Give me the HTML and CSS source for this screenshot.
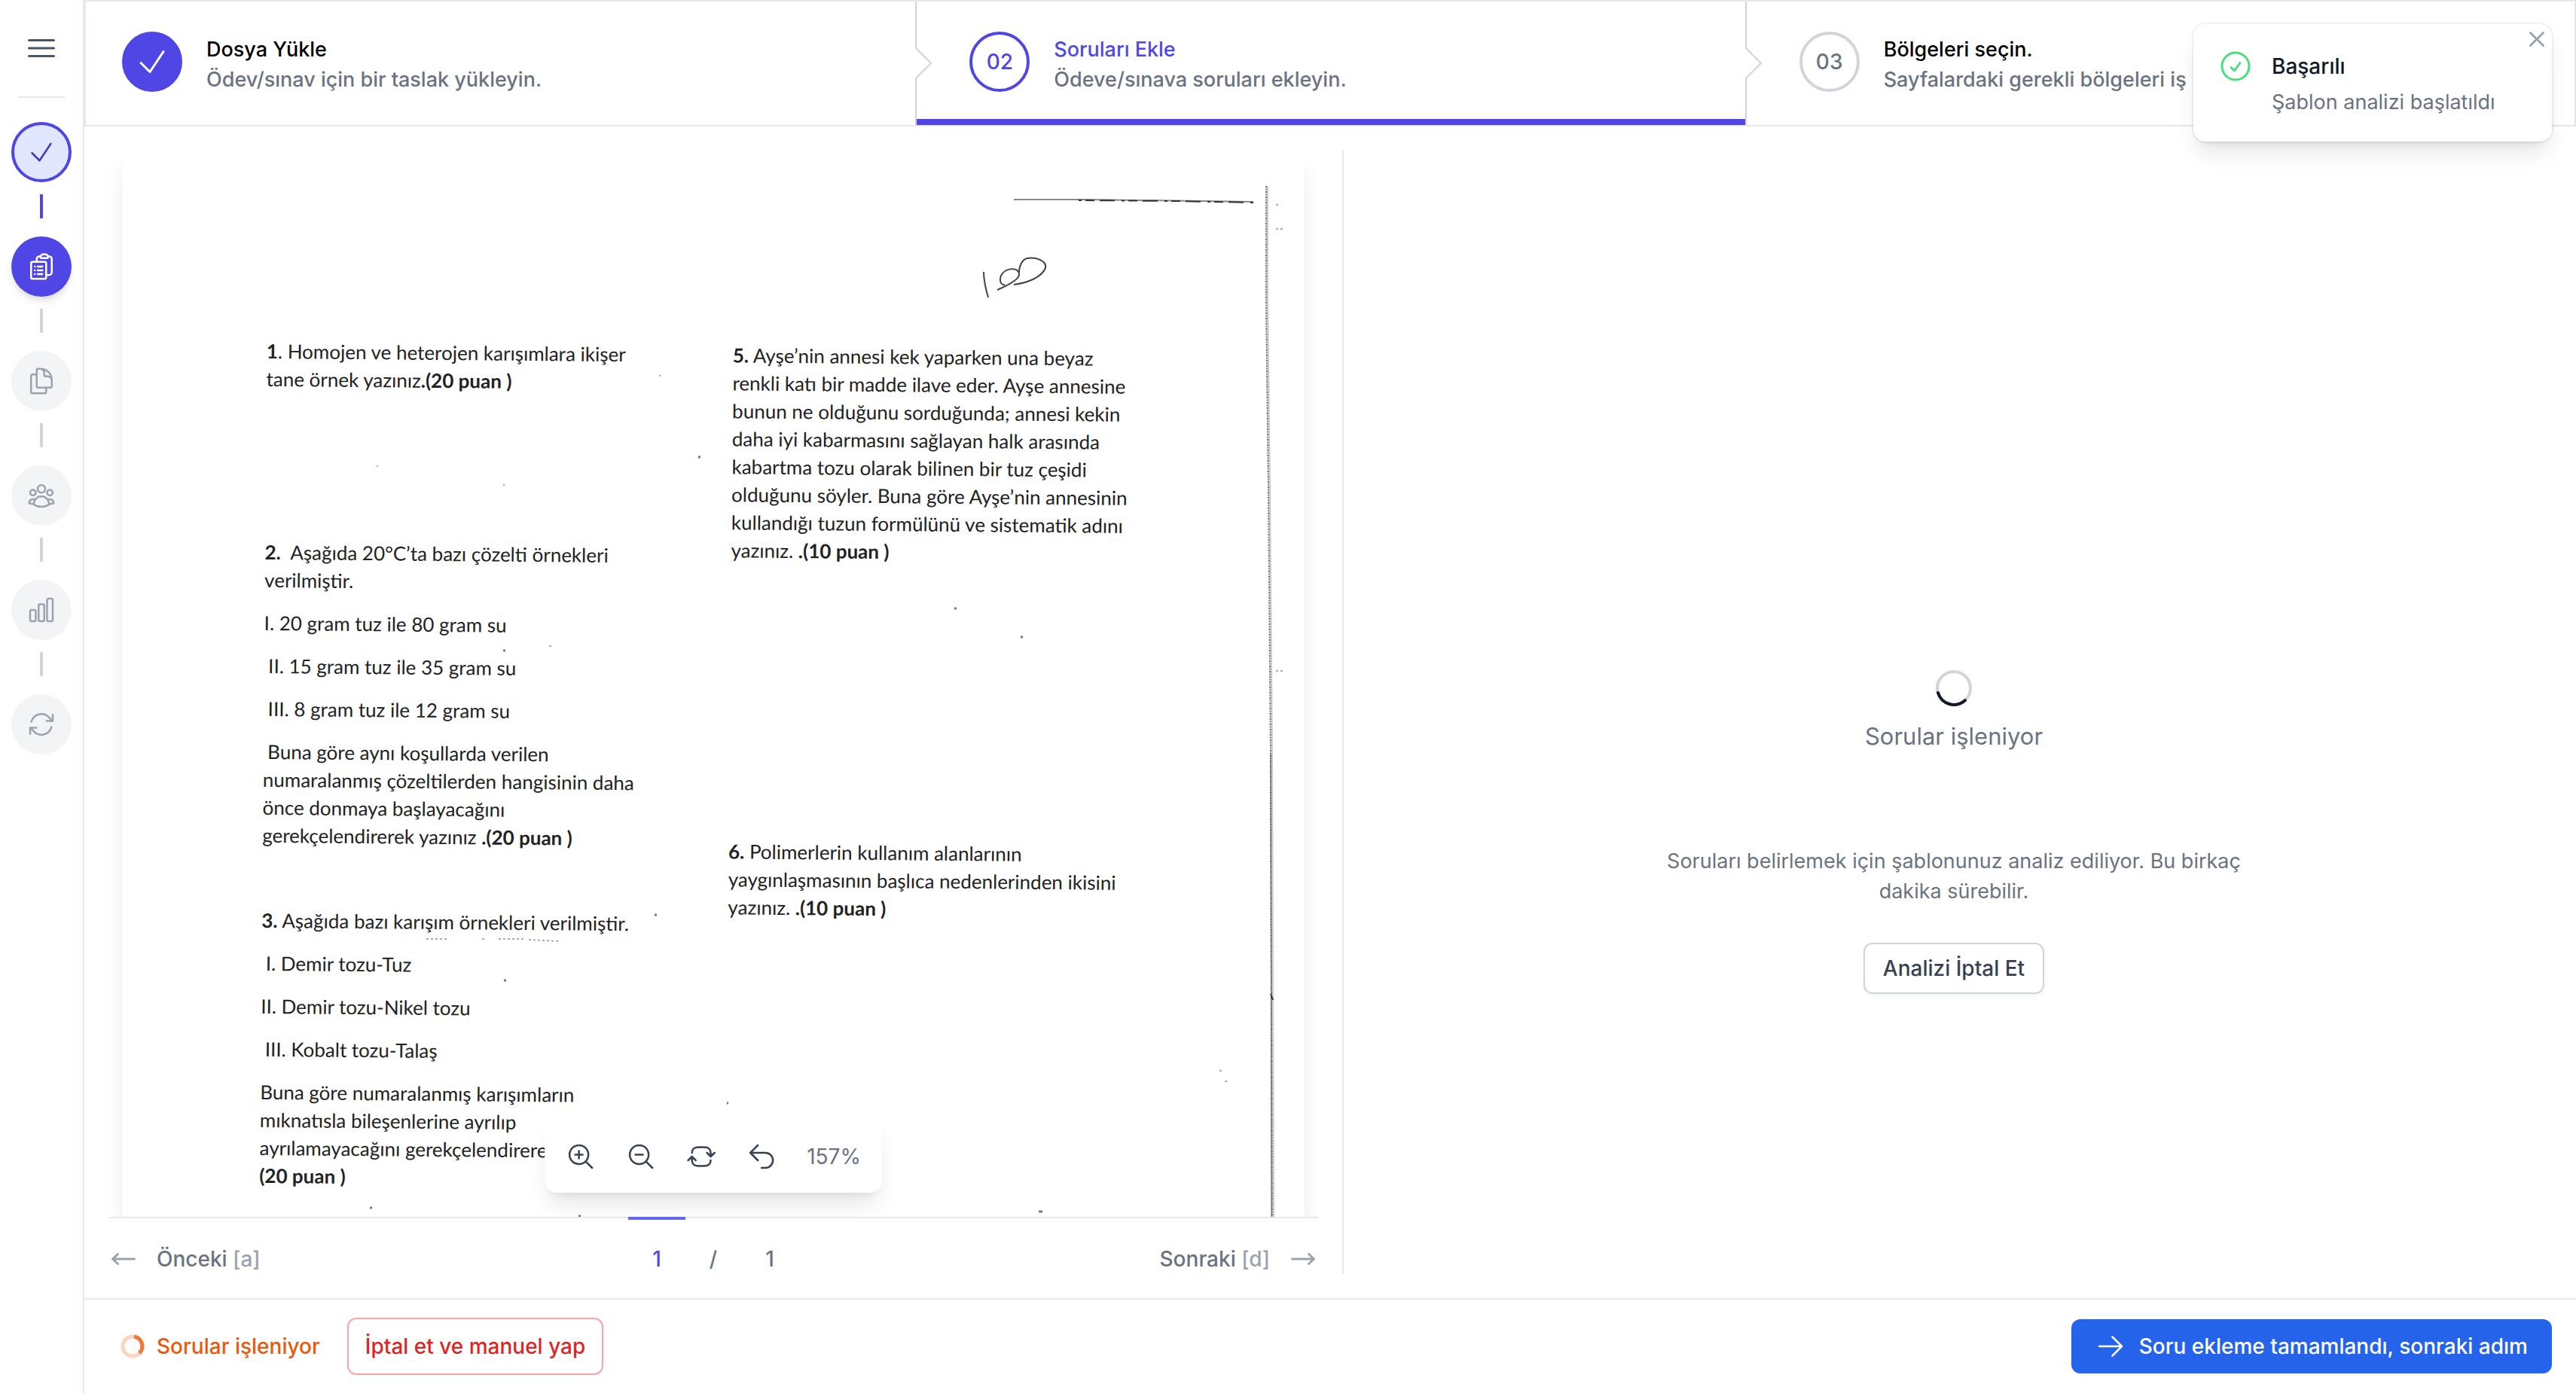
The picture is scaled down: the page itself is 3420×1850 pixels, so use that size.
FILE: index.html
```html
<!DOCTYPE html>
<html lang="tr">

<head>
  <meta charset="UTF-8" />
  <meta name="viewport" content="width=device-width, initial-scale=1.0" />
  <title>Soruları Ekle</title>
  <link rel="stylesheet" href="styles.css">
</head>

<body>
  <div class="app">
    <nav class="sidebar" aria-label="Adımlar">
      <button class="menu-btn" type="button" aria-label="Menü">
        <svg class="icon-lg" viewBox="0 0 24 24"><path d="M3.75 6.75h16.5M3.75 12h16.5m-16.5 5.25h16.5" /></svg>
      </button>
      <div class="sidebar-line"></div>
      <a href="#" class="side-step done" aria-label="Dosya">
        <svg class="icon" viewBox="0 0 24 24"><path d="M4.5 12.75l6 6 9-13.5" /></svg>
      </a>
      <div class="connector active"></div>
      <a href="#" class="side-step current" aria-label="Sorular">
        <svg class="icon" viewBox="0 0 24 24"><path d="M9 12h3.75M9 15h3.75M9 18h3.75m3 .75H18a2.25 2.25 0 002.25-2.25V6.108c0-1.135-.845-2.098-1.976-2.192a48.424 48.424 0 00-1.123-.08m-5.801 0c-.065.21-.1.433-.1.664 0 .414.336.75.75.75h4.5a.75.75 0 00.75-.75 2.25 2.25 0 00-.1-.664m-5.8 0A2.251 2.251 0 0113.5 2.25H15c1.012 0 1.867.668 2.15 1.586m-5.8 0c-.376.023-.75.05-1.124.08C9.095 4.01 8.25 4.973 8.25 6.108V8.25m0 0H4.875c-.621 0-1.125.504-1.125 1.125v11.25c0 .621.504 1.125 1.125 1.125h9.75c.621 0 1.125-.504 1.125-1.125V9.375c0-.621-.504-1.125-1.125-1.125H8.25zM6.75 12h.008v.008H6.75V12zm0 3h.008v.008H6.75V15zm0 3h.008v.008H6.75V18z" /></svg>
      </a>
      <div class="connector"></div>
      <a href="#" class="side-step" aria-label="Kağıtlar">
        <svg class="icon" viewBox="0 0 24 24"><path d="M15.75 17.25v3.375c0 .621-.504 1.125-1.125 1.125h-9.75a1.125 1.125 0 01-1.125-1.125V7.875c0-.621.504-1.125 1.125-1.125H6.75a9.06 9.06 0 011.5.124m7.5 10.376h3.375c.621 0 1.125-.504 1.125-1.125V11.25c0-4.46-3.243-8.161-7.5-8.876a9.06 9.06 0 00-1.5-.124H9.375c-.621 0-1.125.504-1.125 1.125v3.5m7.5 10.375H9.375a1.125 1.125 0 01-1.125-1.125v-9.25m12 6.625v-1.875a3.375 3.375 0 00-3.375-3.375h-1.5a1.125 1.125 0 01-1.125-1.125v-1.5a3.375 3.375 0 00-3.375-3.375H9.75" /></svg>
      </a>
      <div class="connector"></div>
      <a href="#" class="side-step" aria-label="Öğrenciler">
        <svg class="icon" viewBox="0 0 24 24"><path d="M18 18.72a9.094 9.094 0 003.741-.479 3 3 0 00-4.682-2.72m.94 3.198l.001.031c0 .225-.012.447-.037.666A11.944 11.944 0 0112 21c-2.17 0-4.207-.576-5.963-1.584A6.062 6.062 0 016 18.719m12 0a5.971 5.971 0 00-.941-3.197m0 0A5.995 5.995 0 0012 12.75a5.995 5.995 0 00-5.058 2.772m0 0a3 3 0 00-4.681 2.72 8.986 8.986 0 003.74.477m.94-3.197a5.971 5.971 0 00-.94 3.197M15 6.75a3 3 0 11-6 0 3 3 0 016 0zm6 3a2.25 2.25 0 11-4.5 0 2.25 2.25 0 014.5 0zm-13.5 0a2.25 2.25 0 11-4.5 0 2.25 2.25 0 014.5 0z" /></svg>
      </a>
      <div class="connector"></div>
      <a href="#" class="side-step" aria-label="Sonuçlar">
        <svg class="icon" viewBox="0 0 24 24"><path d="M3 13.125C3 12.504 3.504 12 4.125 12h2.25c.621 0 1.125.504 1.125 1.125v6.75C7.5 20.496 6.996 21 6.375 21h-2.25A1.125 1.125 0 013 19.875v-6.75zM9.75 8.625c0-.621.504-1.125 1.125-1.125h2.25c.621 0 1.125.504 1.125 1.125v11.25c0 .621-.504 1.125-1.125 1.125h-2.25a1.125 1.125 0 01-1.125-1.125V8.625zM16.5 4.125c0-.621.504-1.125 1.125-1.125h2.25C20.496 3 21 3.504 21 4.125v15.75c0 .621-.504 1.125-1.125 1.125h-2.25a1.125 1.125 0 01-1.125-1.125V4.125z" /></svg>
      </a>
      <div class="connector"></div>
      <a href="#" class="side-step" aria-label="Yenile">
        <svg class="icon" viewBox="0 0 24 24"><path d="M16.023 9.348h4.992v-.001M2.985 19.644v-4.992m0 0h4.992m-4.993 0l3.181 3.183a8.25 8.25 0 0013.803-3.7M4.031 9.865a8.25 8.25 0 0113.803-3.7l3.181 3.182m0-4.991v4.99" /></svg>
      </a>
    </nav>

    <div class="content">
      <ol class="steps">
        <li class="step step-done">
          <span class="step-circle">
            <svg class="icon-lg" viewBox="0 0 24 24"><path d="M4.5 12.75l6 6 9-13.5" /></svg>
          </span>
          <div class="step-text">
            <p class="step-title">Dosya Yükle</p>
            <p class="step-desc">Ödev/sınav için bir taslak yükleyin.</p>
          </div>
        </li>
        <li class="step step-current">
          <svg class="step-sep" viewBox="0 0 12 82" preserveAspectRatio="none"><path d="M0.5 0V31L10.5 41L0.5 51V82" /></svg>
          <span class="step-circle">02</span>
          <div class="step-text">
            <p class="step-title">Soruları Ekle</p>
            <p class="step-desc">Ödeve/sınava soruları ekleyin.</p>
          </div>
        </li>
        <li class="step">
          <svg class="step-sep" viewBox="0 0 12 82" preserveAspectRatio="none"><path d="M0.5 0V31L10.5 41L0.5 51V82" /></svg>
          <span class="step-circle">03</span>
          <div class="step-text">
            <p class="step-title">Bölgeleri seçin.</p>
            <p class="step-desc">Sayfalardaki gerekli bölgeleri iş</p>
          </div>
        </li>
      </ol>

      <main class="main">
        <section class="doc-panel">
          <div class="viewer">
            <div class="sheet">
              <div class="exam">
                <div class="exam-col">
                  <div class="question q1">
                    <p><b>1</b>. Homojen ve heterojen karışımlara ikişer<br>tane örnek yazınız<b>.(20 puan )</b></p>
                  </div>
                  <div class="question q2">
                    <p><b>2.</b>&nbsp; Aşağıda 20°C’ta bazı çözelti örnekleri<br>verilmiştir.</p>
                    <p>I. 20 gram tuz ile 80 gram su</p>
                    <p class="indent">II. 15 gram tuz ile 35 gram su</p>
                    <p class="indent">III. 8 gram tuz ile 12 gram su</p>
                    <p class="indent">Buna göre aynı koşullarda verilen<br>numaralanmış çözeltilerden hangisinin daha<br>önce donmaya başlayacağını<br>gerekçelendirerek yazınız <b>.(20 puan )</b></p>
                  </div>
                  <div class="question">
                    <p><b>3.</b> Aşağıda bazı karışım örnekleri verilmiştir.</p>
                    <p class="indent">I. Demir tozu-Tuz</p>
                    <p>II. Demir tozu-Nikel tozu</p>
                    <p class="indent">III. Kobalt tozu-Talaş</p>
                    <p>Buna göre numaralanmış karışımların<br>mıknatısla bileşenlerine ayrılıp<br>ayrılamayacağını gerekçelendirere<br><b>(20 puan )</b></p>
                  </div>
                </div>
                <div class="exam-col">
                  <div class="question q5">
                    <p><b>5.</b> Ayşe’nin annesi kek yaparken una beyaz<br>renkli katı bir madde ilave eder. Ayşe annesine<br>bunun ne olduğunu sorduğunda; annesi kekin<br>daha iyi kabarmasını sağlayan halk arasında<br>kabartma tozu olarak bilinen bir tuz çeşidi<br>olduğunu söyler. Buna göre Ayşe’nin annesinin<br>kullandığı tuzun formülünü ve sistematik adını<br>yazınız. <b>.(10 puan )</b></p>
                  </div>
                  <div class="question">
                    <p><b>6.</b> Polimerlerin kullanım alanlarının<br>yaygınlaşmasının başlıca nedenlerinden ikisini<br>yazınız. <b>.(10 puan )</b></p>
                  </div>
                </div>
              </div>
              <!-- scanner edges, specks and the handwritten grade -->
              <svg class="scan-marks" viewBox="0 0 1570 2220" aria-hidden="true">
                <path class="edge" d="M1184 65L1280 65L1502 68" />
                <path class="ink" d="M1270 66L1400 67L1502 69" stroke-dasharray="4 5 12 7 20 9" />
                <path class="edge-wide" d="M1520 47L1520 200L1523 450L1526 800L1528 1416" />
                <path class="grain" d="M1519 47L1519 200L1522 450L1525 800L1527 1416" />
                <path class="grain-dark" d="M1525 800L1526 1416" />
                <path class="ink" d="M1525 1120l3 8" />
                <path class="pen" d="M1144 161C1144 172 1147 185 1150 195" />
                <path class="pen" d="M1162 185C1176 179 1193 170 1191 163C1188 154 1172 156 1167 166C1164 174 1168 179 1172 178" />
                <path class="pen" d="M1191 162C1191 152 1196 144 1202 143C1215 141 1228 147 1226 156C1221 168 1202 176 1184 178" />
                <path class="faint" d="M404 1047h30M478 1047h6M500 1047h36M540 1048l40 2M1532 72h6M1532 104h10M1532 691h10M1457 1222h4M1464 1236h4M713 299h2M567 658h3M338 419h2M506 444h2" />
                <path class="speck" d="M765 407h3M506 664h3M1105 608h3M1193 646h3M707 1015h3M507 1102h3M329 1404h3M606 1415h3M803 1265h2M1217 1409h5" />
              </svg>
            </div>
            <div class="toolbar">
              <button type="button" aria-label="Yakınlaştır">
                <svg class="icon" viewBox="0 0 24 24"><path d="M21 21l-5.197-5.197m0 0A7.5 7.5 0 105.196 5.196a7.5 7.5 0 0010.607 10.607zM10.5 7.5v6m3-3h-6" /></svg>
              </button>
              <button type="button" aria-label="Uzaklaştır">
                <svg class="icon" viewBox="0 0 24 24"><path d="M21 21l-5.197-5.197m0 0A7.5 7.5 0 105.196 5.196a7.5 7.5 0 0010.607 10.607zM13.5 10.5h-6" /></svg>
              </button>
              <button type="button" aria-label="Döndür">
                <svg class="icon" viewBox="0 0 24 24"><path d="M19.5 12c0-1.232-.046-2.453-.138-3.662a4.006 4.006 0 00-3.7-3.7 48.678 48.678 0 00-7.324 0 4.006 4.006 0 00-3.7 3.7c-.017.22-.032.441-.046.662M19.5 12l3-3m-3 3l-3-3m-12 3c0 1.232.046 2.453.138 3.662a4.006 4.006 0 003.7 3.7 48.656 48.656 0 007.324 0 4.006 4.006 0 003.7-3.7c.017-.22.032-.441.046-.662M4.5 12l3 3m-3-3l-3 3" /></svg>
              </button>
              <button type="button" aria-label="Sıfırla">
                <svg class="icon" viewBox="0 0 24 24"><path d="M9 15L3 9m0 0l6-6M3 9h12a6 6 0 010 12h-3" /></svg>
              </button>
              <span class="zoom-level">157%</span>
            </div>
          </div>

          <nav class="pager" aria-label="Sayfalar">
            <div class="pager-side">
              <a href="#" class="pager-link">
                <svg class="icon-solid" viewBox="0 0 20 20"><path d="M18 10a.75.75 0 01-.75.75H4.66l2.1 1.95a.75.75 0 11-1.02 1.1l-3.5-3.25a.75.75 0 010-1.1l3.5-3.25a.75.75 0 111.02 1.1l-2.1 1.95h12.59A.75.75 0 0118 10z" /></svg>
                <span>Önceki <kbd>[a]</kbd></span>
              </a>
            </div>
            <a href="#" class="page-num active">1</a>
            <span class="page-num">/</span>
            <a href="#" class="page-num">1</a>
            <div class="pager-side right">
              <a href="#" class="pager-link">
                <span>Sonraki <kbd>[d]</kbd></span>
                <svg class="icon-solid" viewBox="0 0 20 20"><path d="M2 10a.75.75 0 01.75-.75h12.59l-2.1-1.95a.75.75 0 111.02-1.1l3.5 3.25a.75.75 0 010 1.1l-3.5 3.25a.75.75 0 11-1.02-1.1l2.1-1.95H2.75A.75.75 0 012 10z" /></svg>
              </a>
            </div>
          </nav>
        </section>

        <section class="status-panel">
          <div class="status-head">
            <svg class="spinner" viewBox="0 0 48 48">
              <circle cx="24" cy="24" r="22" />
              <path d="M3 30A22 22 0 0 0 39 40" />
            </svg>
            <p>Sorular işleniyor</p>
          </div>
          <div class="status-body">
            <p class="status-desc">Soruları belirlemek için şablonunuz analiz ediliyor. Bu birkaç dakika sürebilir.</p>
            <button class="btn btn-white" type="button">Analizi İptal Et</button>
          </div>
        </section>
      </main>

      <footer class="footer">
        <div class="processing">
          <svg class="spinner-sm" viewBox="0 0 32 32">
            <circle cx="16" cy="16" r="13" />
            <path d="M18 3A13 13 0 0 1 25 25" />
          </svg>
          <span>Sorular işleniyor</span>
        </div>
        <button class="btn btn-red" type="button">İptal et ve manuel yap</button>
        <button class="btn btn-blue" type="button">
          <svg class="icon" viewBox="0 0 24 24"><path d="M13.5 4.5L21 12m0 0l-7.5 7.5M21 12H3" /></svg>
          Soru ekleme tamamlandı, sonraki adım
        </button>
      </footer>
    </div>
  </div>

  <div class="toast" role="status">
    <svg class="icon-lg toast-icon" viewBox="0 0 24 24"><path d="M9 12.75L11.25 15 15 9.75M21 12a9 9 0 11-18 0 9 9 0 0118 0z" /></svg>
    <div class="toast-text">
      <p class="toast-title">Başarılı</p>
      <p class="toast-desc">Şablon analizi başlatıldı</p>
    </div>
    <button class="toast-close" type="button" aria-label="Kapat">
      <svg class="icon-solid" viewBox="0 0 20 20"><path d="M6.28 5.22a.75.75 0 00-1.06 1.06L8.94 10l-3.72 3.72a.75.75 0 101.06 1.06L10 11.06l3.72 3.72a.75.75 0 101.06-1.06L11.06 10l3.72-3.72a.75.75 0 00-1.06-1.06L10 8.94 6.28 5.22z" /></svg>
    </button>
  </div>
</body>

</html>
```

FILE: styles.css
```css
* {
  box-sizing: border-box;
}

body {
  margin: 0;
  font-family: Inter, "Liberation Sans", sans-serif;
  font-size: 28px;
  line-height: 40px;
  color: #111827;
  background-color: #fff;
}

p,
ol {
  margin: 0;
  padding: 0;
}

a {
  color: inherit;
  text-decoration: none;
}

button {
  font: inherit;
  color: inherit;
  background: none;
  border: none;
  padding: 0;
  cursor: pointer;
}

svg {
  display: block;
  flex-shrink: 0;
}

/* outline icons */
.icon,
.icon-lg {
  width: 40px;
  height: 40px;
  fill: none;
  stroke: currentColor;
  stroke-width: 1.5;
  stroke-linecap: round;
  stroke-linejoin: round;
}

.icon-lg {
  width: 48px;
  height: 48px;
}

.icon-solid {
  width: 40px;
  height: 40px;
  fill: #9ca3af;
}

.app {
  display: flex;
  height: 100vh;
}

/* Sidebar */
.sidebar {
  width: 112px;
  flex-shrink: 0;
  border-right: 2px solid #e5e7eb;
  padding-top: 40px;
  display: flex;
  flex-direction: column;
  align-items: center;
}

.menu-btn {
  color: #4b5563;
}

.sidebar-line {
  align-self: stretch;
  height: 2px;
  margin: 40px 24px 32px;
  background-color: #e5e7eb;
}

.side-step {
  width: 80px;
  height: 80px;
  border-radius: 50%;
  display: flex;
  align-items: center;
  justify-content: center;
  background-color: #f3f4f6;
  color: #9ca3af;
}

.side-step.done {
  background-color: #e0e7ff;
  border: 4px solid #4f46e5;
  color: #4338ca;
}

.side-step.current {
  background-color: #4f46e5;
  color: #fff;
  box-shadow: 0 8px 12px -2px rgba(0, 0, 0, 0.1), 0 4px 8px -4px rgba(0, 0, 0, 0.1);
}

.connector {
  width: 4px;
  height: 32px;
  margin: 16px 0 24px;
  background-color: #d1d5db;
}

.connector.active {
  background-color: #4f46e5;
}

.content {
  flex: 1;
  min-width: 0;
  display: flex;
  flex-direction: column;
}

/* Steps */
.steps {
  display: flex;
  list-style: none;
  border: 2px solid #e5e7eb;
}

.step {
  flex: 1 1 0;
  min-width: 0;
  position: relative;
  display: flex;
  gap: 32px;
  padding: 40px 48px;
}

.step-sep {
  position: absolute;
  left: 0;
  top: 0;
  width: 24px;
  height: 100%;
  fill: none;
  stroke: #d1d5db;
}

.step-sep path {
  stroke-width: 2;
  vector-effect: non-scaling-stroke;
}

.step-sep + .step-circle {
  margin-left: 24px;
}

.step-circle {
  width: 80px;
  height: 80px;
  flex-shrink: 0;
  border-radius: 50%;
  border: 4px solid #d1d5db;
  display: flex;
  align-items: center;
  justify-content: center;
  font-weight: 500;
  color: #6b7280;
}

.step-text {
  margin-top: 4px;
  font-size: 27px;
  font-weight: 500;
  white-space: nowrap;
}

.step-title {
  color: #000;
}

.step-desc {
  color: #6b7280;
}

.step-done .step-circle {
  background-color: #4f46e5;
  border-color: #4f46e5;
  color: #fff;
}

.step-current::after {
  content: "";
  position: absolute;
  left: 2px;
  right: 0;
  bottom: 0;
  height: 8px;
  background-color: #4f46e5;
}

.step-current .step-circle {
  border-color: #4f46e5;
}

.step-current .step-circle,
.step-current .step-title {
  color: #4f46e5;
}

/* Main area */
.main {
  flex: 1;
  min-height: 0;
  display: grid;
  grid-template-columns: 82fr 81fr;
  grid-template-rows: minmax(0, 1fr);
  padding: 32px 16px 32px 32px;
}

.doc-panel {
  min-width: 0;
  display: flex;
  flex-direction: column;
  padding-right: 32px;
  border-right: 2px solid #e5e7eb;
}

.viewer {
  flex: 1;
  min-height: 0;
  position: relative;
  overflow: hidden;
}

.sheet {
  position: relative;
  margin: 0 18px;
  aspect-ratio: 210 / 297;
  padding: 248px 0 0 192px;
  box-shadow: 0 20px 30px -6px rgba(0, 0, 0, 0.1), 0 8px 12px -8px rgba(0, 0, 0, 0.1);
}

/* the scanned paper sits slightly askew */
.exam {
  display: grid;
  grid-template-columns: 619px 1fr;
  font-family: Lato, "Open Sans", sans-serif;
  font-size: 26px;
  line-height: 37px;
  color: #222;
  white-space: nowrap;
  transform: rotate(0.5deg);
  transform-origin: left top;
}

.question p + p {
  margin-top: 20px;
}

.q1 {
  margin-bottom: 193px;
}

.q2 {
  margin-bottom: 76px;
}

.q5 {
  margin-bottom: 363px;
}

.indent {
  text-indent: 6px;
}

.scan-marks {
  position: absolute;
  left: 0;
  top: 0;
  width: 100%;
  fill: none;
}

.edge {
  stroke: #888;
  stroke-width: 2;
}

.edge-wide {
  stroke: #ccc;
  stroke-width: 4;
}

.grain {
  stroke: #777;
  stroke-width: 2;
  stroke-dasharray: 2 2 1 2;
}

.grain-dark {
  stroke: #555;
  stroke-width: 1;
}

.ink {
  stroke: #333;
  stroke-width: 2;
}

.pen {
  stroke: #444;
  stroke-width: 2;
}

.faint {
  stroke: #aaa;
  stroke-width: 2;
  stroke-dasharray: 3 3;
}

.speck {
  stroke: #777;
  stroke-width: 3;
}

.toolbar {
  position: absolute;
  left: 50%;
  bottom: 32px;
  transform: translateX(-50%);
  height: 96px;
  padding: 0 28px;
  display: flex;
  align-items: center;
  gap: 40px;
  background-color: #fff;
  border-radius: 16px;
  color: #374151;
  box-shadow: 0 20px 30px -6px rgba(0, 0, 0, 0.1), 0 8px 12px -8px rgba(0, 0, 0, 0.1);
}

.zoom-level {
  color: #6b7280;
}

/* Pager */
.pager {
  display: flex;
  border-top: 2px solid #e5e7eb;
  font-weight: 500;
  color: #6b7280;
}

.pager-side {
  flex: 1;
  display: flex;
}

.pager-side.right {
  justify-content: flex-end;
}

.pager-link,
.page-num {
  margin-top: -2px;
  border-top: 4px solid transparent;
  padding-top: 32px;
}

.pager-link {
  display: flex;
  gap: 24px;
}

.page-num {
  padding-left: 32px;
  padding-right: 32px;
}

.page-num.active {
  border-color: #6366f1;
  color: #4f46e5;
}

kbd {
  font: inherit;
  color: #9ca3af;
}

/* Status */
.status-panel {
  display: grid;
  grid-template-rows: 1fr auto 1fr;
  justify-items: center;
  text-align: center;
  color: #6b7280;
}

.status-head {
  grid-row: 2;
  display: flex;
  flex-direction: column;
  align-items: center;
  gap: 16px;
  font-size: 31px;
  line-height: 48px;
}

.spinner {
  width: 48px;
  height: 48px;
  fill: none;
  stroke-width: 4;
  stroke-linecap: round;
}

.spinner circle {
  stroke: #d1d5db;
}

.spinner path {
  stroke: #111827;
}

.status-body {
  grid-row: 3;
  max-width: 768px;
  padding-top: 122px;
}

.status-desc {
  font-size: 27px;
}

.btn {
  font-weight: 500;
  border-radius: 12px;
  padding: 12px 24px;
}

.btn-white {
  margin-top: 48px;
  border: 2px solid #d1d5db;
  color: #374151;
  box-shadow: 0 2px 4px rgba(0, 0, 0, 0.05);
}

/* Footer */
.footer {
  display: flex;
  align-items: center;
  padding: 24px 32px 24px 48px;
  border-top: 2px solid #e5e7eb;
}

.processing {
  display: flex;
  align-items: center;
  gap: 16px;
  font-weight: 500;
  color: #ea580c;
}

.spinner-sm {
  width: 32px;
  height: 32px;
  fill: none;
  stroke: #ea580c;
  stroke-width: 5;
}

.spinner-sm circle {
  opacity: 0.25;
}

.spinner-sm path {
  opacity: 0.75;
}

.btn-red {
  margin-left: 36px;
  padding: 16px 22px;
  border: 2px solid #fca5a5;
  color: #dc2626;
}

.btn-blue {
  margin-left: auto;
  display: flex;
  align-items: center;
  gap: 18px;
  padding: 16px 32px;
  background-color: #2563eb;
  color: #fff;
  box-shadow: 0 2px 4px rgba(0, 0, 0, 0.05);
}

/* Toast */
.toast {
  position: absolute;
  top: 32px;
  right: 32px;
  width: 476px;
  padding: 32px;
  display: flex;
  gap: 24px;
  background-color: #fff;
  border-radius: 16px;
  box-shadow: 0 0 0 2px rgba(0, 0, 0, 0.05), 0 20px 30px -6px rgba(0, 0, 0, 0.1), 0 8px 12px -8px rgba(0, 0, 0, 0.1);
}

.toast-icon {
  color: #4ade80;
}

.toast-text {
  padding-top: 4px;
}

.toast-title {
  font-weight: 500;
}

.toast-desc {
  margin-top: 8px;
  font-size: 27px;
  color: #6b7280;
}

.toast-close {
  position: absolute;
  top: 0;
  right: 0;
}
```
